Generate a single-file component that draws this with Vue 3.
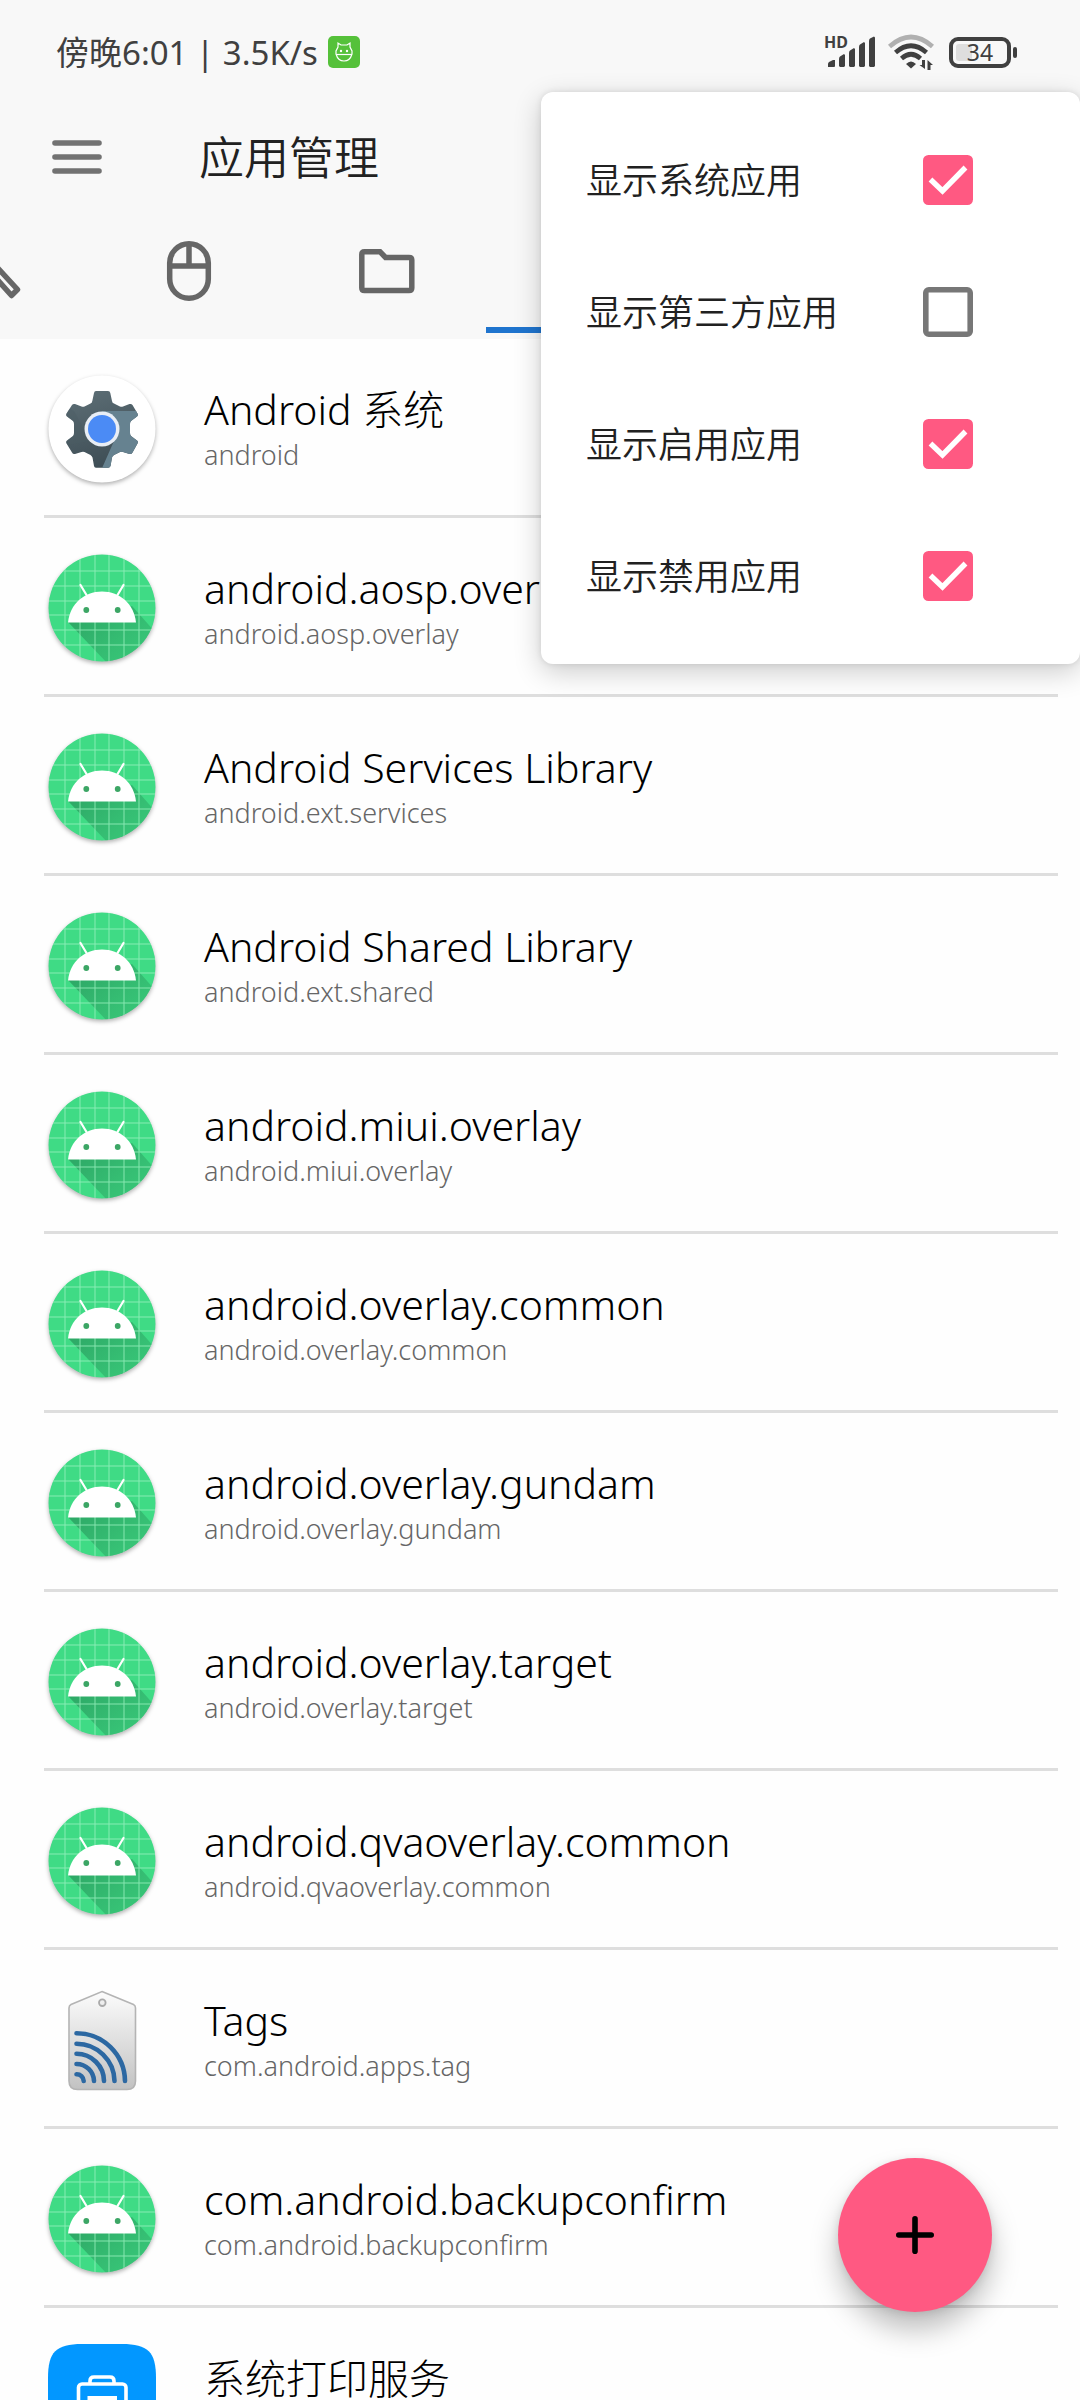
<script setup>
import {reactive} from "vue";

const apps = [
    {name: "Android 系统", id: "android", icon: "gear"},
    {name: "android.aosp.overlay", id: "android.aosp.overlay", icon: "robot"},
    {name: "Android Services Library", id: "android.ext.services", icon: "robot"},
    {name: "Android Shared Library", id: "android.ext.shared", icon: "robot"},
    {name: "android.miui.overlay", id: "android.miui.overlay", icon: "robot"},
    {name: "android.overlay.common", id: "android.overlay.common", icon: "robot"},
    {name: "android.overlay.gundam", id: "android.overlay.gundam", icon: "robot"},
    {name: "android.overlay.target", id: "android.overlay.target", icon: "robot"},
    {name: "android.qvaoverlay.common", id: "android.qvaoverlay.common", icon: "robot"},
    {name: "Tags", id: "com.android.apps.tag", icon: "tag"},
    {name: "com.android.backupconfirm", id: "com.android.backupconfirm", icon: "robot"},
    {name: "系统打印服务", id: "", icon: "print"},
];

const filters = reactive([
    {key: "system", label: "显示系统应用", checked: true},
    {key: "third", label: "显示第三方应用", checked: false},
    {key: "enabled", label: "显示启用应用", checked: true},
    {key: "disabled", label: "显示禁用应用", checked: true},
]);

const gridLines = [17, 32, 47, 61, 76, 91];
</script>

<template>
    <div class="screen">
        <header class="header">
            <div class="status_bar">
                <span class="status_text">傍晚6:01 | 3.5K/s</span>
                <svg class="status_app" viewBox="0 0 32 32">
                    <rect width="32" height="32" rx="5" fill="#55c13a"/>
                    <g fill="none" stroke="#fff" stroke-width="1.2">
                        <path d="M10 11 L10 7 L13 9 H19 L22 7 V11 L24 15 V18 Q22 25 16 25 Q10 25 8 18 V15 Z"/>
                        <path d="M8 18.500 H24"/>
                    </g>
                    <circle cx="13" cy="15" r="1.200" fill="#fff"/>
                    <circle cx="19" cy="15" r="1.200" fill="#fff"/>
                </svg>
                <div class="status_right">
                    <div class="signal_box">
                        <span class="hd">HD</span>
                        <svg class="signal" viewBox="0 0 52 34">
                            <g fill="#404040">
                                <path d="M4 32 V29 Q4 28 5 27 L9 25 H11 V31 Q11 32 10 32 H5 Z"/>
                                <path d="M15 31 V24 Q15 22 16 21.500 L20 19 L21 20 V31 L20 32 H16 Z"/>
                                <path d="M25 31 V18 Q25 16 26 15.500 L30 13 L31 14 V31 L30 32 H26 Z"/>
                                <path d="M35 31 V12 Q35 10 36 9.500 L40 7 L41 8 V31 L40 32 H36 Z"/>
                                <path d="M45 31 V6 Q45 4 46 3.500 L50 1.500 L51 2.500 V31 L50 32 H46 Z"/>
                            </g>
                        </svg>
                    </div>
                    <svg class="wifi" viewBox="0 0 46 36">
                        <g fill="none" stroke="#404040" stroke-width="4.600">
                            <path d="M1.500 12.500 Q23 -6.500 44.500 12.500" stroke="#b0b0b0"/>
                            <path d="M7.500 18.500 Q23 5 38.500 18.500"/>
                            <path d="M13.500 24.500 Q23 16 32.500 24.500"/>
                        </g>
                        <path d="M23 34.500 L18 30 Q23 25 28 30 Z" fill="#404040"/>
                        <path d="M37 26 V35 L31.500 31 H34 V26 Z M39.500 36 V26 L45 31 H42.500 V36 Z" fill="#404040"/>
                    </svg>
                    <div class="battery"><span class="battery_level"></span><span class="battery_num">34</span></div>
                </div>
            </div>

            <div class="title_bar">
                <button class="icon_btn" aria-label="菜单">
                    <svg class="burger" viewBox="0 0 50 34">
                        <path d="M3 3 H47 M3 17 H47 M3 31 H47" stroke="#727272" stroke-width="5.600" stroke-linecap="round"/>
                    </svg>
                </button>
                <h1>应用管理</h1>
            </div>

            <nav class="tabs">
                <button class="tab" aria-label="工具">
                    <svg viewBox="0 0 66 66">
                        <path d="M30 31 L53.500 57.500 L59.500 51.500 L36 26" fill="none" stroke="#666" stroke-width="5.500" stroke-linejoin="round"/>
                    </svg>
                </button>
                <button class="tab" aria-label="鼠标">
                    <svg viewBox="0 0 66 66">
                        <g fill="none" stroke="#666" stroke-width="5.500">
                            <rect x="13.700" y="5.700" width="38.600" height="54.600" rx="19.300"/>
                            <path d="M14 28 H52 M33 6 V28"/>
                        </g>
                    </svg>
                </button>
                <button class="tab" aria-label="文件">
                    <svg viewBox="0 0 66 66">
                        <path d="M10.500 13.700 H26 L31.500 19.500 H55 Q57.800 19.500 57.800 22 V50 Q57.800 52.500 55 52.500 H10.500 Q7.800 52.500 7.800 50 V16.500 Q7.800 13.700 10.500 13.700 Z" fill="none" stroke="#666" stroke-width="5.500"/>
                    </svg>
                </button>
                <button class="tab active" aria-label="应用"></button>
            </nav>
        </header>

        <ul class="app_list">
            <li v-for="app in apps" :key="app.name" class="app_row">
                <svg v-if="app.icon === 'gear'" class="app_icon round" viewBox="0 0 108 108">
                    <defs>
                        <linearGradient id="gearDark" x1="0" y1="0" x2="0.300" y2="1">
                            <stop offset="0" stop-color="#65777e"/>
                            <stop offset="1" stop-color="#3b4a52"/>
                        </linearGradient>
                        <clipPath id="gearClip">
                            <path d="M48 16 H60 Q62 16 62.300 18 L64 26 Q64.300 28 66 28.500 L72 31.500 Q73.500 32 75 31.500 L81.500 29 Q83.500 28.500 84.500 30 L89.500 38.500 Q90.500 40.500 89 41.500 L83 46 Q82 47 82 49 V58 Q82 60 83 61 L89 65.500 Q90.500 66.500 89.500 68.500 L84.500 77.500 Q83.500 79.500 81.500 79 L75 77 Q73.500 76.500 72 77 L66 80 Q64.300 81 64 82.500 L62.500 91 Q62 92.700 60 92.700 H48 Q46.300 92.700 46 91 L44.500 82.500 Q44 81 42.500 80 L36.500 77 Q35 76.500 33.500 77 L27 79 Q25 79.500 24 77.500 L18.500 68.500 Q17.500 66.500 19 65.500 L25 61 Q26 60 26 58 V49 Q26 47 25 46 L19 41.500 Q17.500 40.500 18.500 38.500 L24 30 Q25 28.500 27 29 L33.500 31.500 Q35 32 36.500 31.500 L42.500 28.500 Q44 28 44.300 26 L46 18 Q46.300 16 48 16 Z"/>
                        </clipPath>
                    </defs>
                    <circle cx="54" cy="54" r="53.500" fill="#fff"/>
                    <g clip-path="url(#gearClip)">
                        <rect width="108" height="108" fill="url(#gearDark)"/>
                        <path d="M54 36 H100 V100 H51 L66 66 Z" fill="#668290"/>
                        <path d="M18 32 L26 36 L42 66 L20 70 Z" fill="#4c5c64" opacity=".4"/>
                    </g>
                    <circle cx="54" cy="54" r="17.500" fill="#e9eef5"/>
                    <circle cx="54" cy="54" r="14" fill="#4b8bf5"/>
                </svg>
                <svg v-else-if="app.icon === 'robot'" class="app_icon round" viewBox="0 0 108 108">
                    <defs>
                        <clipPath id="robotClip"><circle cx="54" cy="54" r="53.500"/></clipPath>
                        <linearGradient id="robotShade" x1="0" y1="0" x2="1" y2="0.800">
                            <stop offset="0" stop-color="#1d7a4a" stop-opacity=".6"/>
                            <stop offset="1" stop-color="#2a9a5c" stop-opacity=".28"/>
                        </linearGradient>
                    </defs>
                    <g clip-path="url(#robotClip)">
                        <rect width="108" height="108" fill="#3fdb85"/>
                        <path d="M20 68 L60 110 H108 V79 L84 52 Z" fill="url(#robotShade)"/>
                        <g stroke="#9bf0c0" stroke-width="1" opacity=".8">
                            <path v-for="n in gridLines" :key="n" :d="`M${n} 0 V108 M0 ${n} H108`"/>
                        </g>
                    </g>
                    <path d="M32.500 31 L38.500 41 M75.500 31 L69.500 41" stroke="#fff" stroke-width="2.200" stroke-linecap="round"/>
                    <path d="M20 68.500 C22 50 36 37.500 54 37.500 C72 37.500 86 50 88 68.500 Z" fill="#fff"/>
                    <circle cx="38.300" cy="56" r="2.900" fill="#3ca665"/>
                    <circle cx="69.700" cy="56" r="2.900" fill="#3ca665"/>
                </svg>
                <svg v-else-if="app.icon === 'tag'" class="app_icon" viewBox="0 0 108 108">
                    <defs>
                        <linearGradient id="tagFill" x1="0" y1="0" x2="0" y2="1">
                            <stop offset="0" stop-color="#fcfcfc"/>
                            <stop offset="1" stop-color="#c2c2c2"/>
                        </linearGradient>
                    </defs>
                    <path d="M54 5.500 L85.500 18.500 Q87.500 19.500 87.500 22 V95 Q87.500 103.500 79 103.500 H29.500 Q21 103.500 21 95 V22 Q21 19.500 23 18.500 Z" fill="url(#tagFill)" stroke="#b4b4b4" stroke-width="1.600"/>
                    <circle cx="54.300" cy="16.700" r="3.300" fill="#eee" stroke="#aaa" stroke-width="1.800"/>
                    <g fill="none" stroke="#2c68a2" stroke-width="4.600" stroke-linecap="round">
                        <path d="M28.500 47.300 A48.500 48.500 0 0 1 77 95"/>
                        <path d="M28.500 57.700 A38 38 0 0 1 66.500 95"/>
                        <path d="M28.500 67.800 A27.500 27.500 0 0 1 56 95"/>
                        <path d="M28.500 78 A17.500 17.500 0 0 1 46 95"/>
                        <path d="M28.500 88.300 A7 7 0 0 1 35.700 95"/>
                    </g>
                </svg>
                <svg v-else class="app_icon" viewBox="0 0 108 108">
                    <path d="M0 34 C0 8 8 0 34 0 H74 C100 0 108 8 108 34 V74 C108 100 100 108 74 108 H34 C8 108 0 100 0 74 Z" fill="#0297ff"/>
                    <g fill="none" stroke="#fff" stroke-width="3.600">
                        <path d="M42 39 V37 Q42 33 46 33 H62 Q66 33 66 37 V39"/>
                        <rect x="30.500" y="40" width="47.500" height="40" rx="3.500"/>
                    </g>
                    <rect x="39.500" y="52" width="29.500" height="18" fill="#fff"/>
                </svg>
                <div class="app_text">
                    <div class="app_name">{{ app.name }}</div>
                    <div v-if="app.id" class="app_id">{{ app.id }}</div>
                </div>
            </li>
        </ul>

        <div class="menu">
            <label v-for="item in filters" :key="item.key" class="menu_item">
                <span>{{ item.label }}</span>
                <input v-model="item.checked" type="checkbox">
                <svg class="box" viewBox="0 0 50 50">
                    <template v-if="item.checked">
                        <rect width="50" height="50" rx="5.500" fill="#ff5982"/>
                        <path d="M7.500 24.500 L19.500 36 L42.500 12.500" fill="none" stroke="#fff" stroke-width="5.400"/>
                    </template>
                    <rect v-else x="2.800" y="2.800" width="44.400" height="44.400" rx="3" fill="none" stroke="#777" stroke-width="5.600"/>
                </svg>
            </label>
        </div>

        <button class="fab" aria-label="添加">
            <svg viewBox="0 0 38 38">
                <path d="M19 2.800 V35.200 M2.800 19 H35.200" stroke="#000" stroke-width="5.600" stroke-linecap="round"/>
            </svg>
        </button>
    </div>
</template>

<style>
    body {
        margin: 0;
        background: #fefefe;
    }
</style>

<style scoped>
    .screen {
        position: relative;
        display: flex;
        flex-direction: column;
        height: 100vh;
        overflow: hidden;
        background: #fefefe;
        color: #000;
        font-family: "Noto Sans", "Noto Sans CJK SC", sans-serif;
        font-weight: 300;
    }

    button {
        padding: 0;
        border: none;
        background: none;
        cursor: pointer;
    }

    svg {
        display: block;
    }

    .header {
        flex: none;
        background: #f8f8f8;
    }

    .status_bar {
        display: flex;
        align-items: center;
        height: 104px;
        padding: 0 63px 0 56px;
        color: #404040;
    }

    .status_text {
        padding-top: 2px;
        font-size: 33px;
        line-height: 40px;
        font-weight: 400;
    }

    .status_app {
        width: 32px;
        height: 32px;
        margin-left: 10px;
    }

    .status_right {
        display: flex;
        align-items: center;
        gap: 12px;
        margin-left: auto;
    }

    .signal_box {
        position: relative;
    }

    .signal {
        width: 52px;
        height: 34px;
    }

    .hd {
        position: absolute;
        top: 0;
        left: 0;
        font-size: 16px;
        line-height: 14px;
        font-weight: 700;
    }

    .wifi {
        width: 46px;
        height: 36px;
    }

    .battery {
        position: relative;
        display: flex;
        align-items: center;
        justify-content: center;
        box-sizing: border-box;
        width: 62px;
        height: 31px;
        margin: 0 6px 0 3px;
        border: 4px solid #404040;
        border-radius: 9px;
    }

    .battery::after {
        content: "";
        position: absolute;
        right: -10px;
        width: 4px;
        height: 11px;
        border-radius: 2px;
        background: #404040;
    }

    .battery_level {
        position: absolute;
        left: 3px;
        width: 16px;
        height: 17px;
        border-radius: 3px;
        background: #dedede;
    }

    .battery_num {
        position: relative;
        font-size: 23px;
        line-height: 24px;
        font-weight: 400;
    }

    .title_bar {
        display: flex;
        align-items: center;
        height: 106px;
        padding-left: 52px;
    }

    .burger {
        width: 50px;
        height: 34px;
    }

    h1 {
        margin: 2px 0 0 97px;
        color: #212121;
        font-size: 45px;
        line-height: 60px;
        font-weight: 350;
    }

    .tabs {
        display: flex;
        height: 123px;
        margin: 0 0 6px -108px;
    }

    .tab {
        display: flex;
        justify-content: center;
        box-sizing: border-box;
        flex: none;
        width: 198px;
        padding-top: 28px;
    }

    .tab svg {
        width: 66px;
        height: 66px;
    }

    .tab.active {
        border-bottom: 6px solid #1f74ce;
    }

    .app_list {
        flex: 1;
        min-height: 0;
        margin: 0;
        padding: 0 22px 0 44px;
        overflow: hidden;
        list-style: none;
    }

    .app_row {
        display: flex;
        align-items: flex-start;
        gap: 48px;
        height: 176px;
        padding-left: 4px;
        border-bottom: 3px solid #dedede;
    }

    .app_icon {
        flex: none;
        width: 108px;
        height: 108px;
        margin-top: 36px;
    }

    .app_icon.round {
        border-radius: 50%;
        filter: drop-shadow(0 2px 2px rgba(0, 0, 0, .3));
    }

    .app_text {
        padding-top: 48px;
    }

    .app_name {
        font-size: 41px;
        line-height: 44px;
    }

    .app_id {
        padding-top: 4px;
        color: #666;
        font-size: 27px;
        line-height: 40px;
    }

    .menu {
        position: absolute;
        top: 92px;
        right: 0;
        box-sizing: border-box;
        width: 539px;
        padding: 22px 0;
        border-radius: 12px;
        background: #fff;
        box-shadow: 0 8px 28px rgba(0, 0, 0, .2), 0 0 6px rgba(0, 0, 0, .1);
    }

    .menu_item {
        display: flex;
        align-items: center;
        justify-content: space-between;
        height: 132px;
        padding: 0 107px 0 45px;
        color: #212121;
        font-size: 36px;
        font-weight: 350;
        cursor: pointer;
    }

    .menu_item span {
        padding-bottom: 3px;
    }

    .menu_item input {
        position: absolute;
        opacity: 0;
    }

    .box {
        width: 50px;
        height: 50px;
    }

    .fab {
        position: absolute;
        right: 88px;
        bottom: 88px;
        display: flex;
        align-items: center;
        justify-content: center;
        width: 154px;
        height: 154px;
        border-radius: 50%;
        background: #ff5982;
        box-shadow: 0 18px 28px rgba(0, 0, 0, .25), 0 2px 8px rgba(0, 0, 0, .1);
    }

    .fab svg {
        width: 38px;
        height: 38px;
    }
</style>
